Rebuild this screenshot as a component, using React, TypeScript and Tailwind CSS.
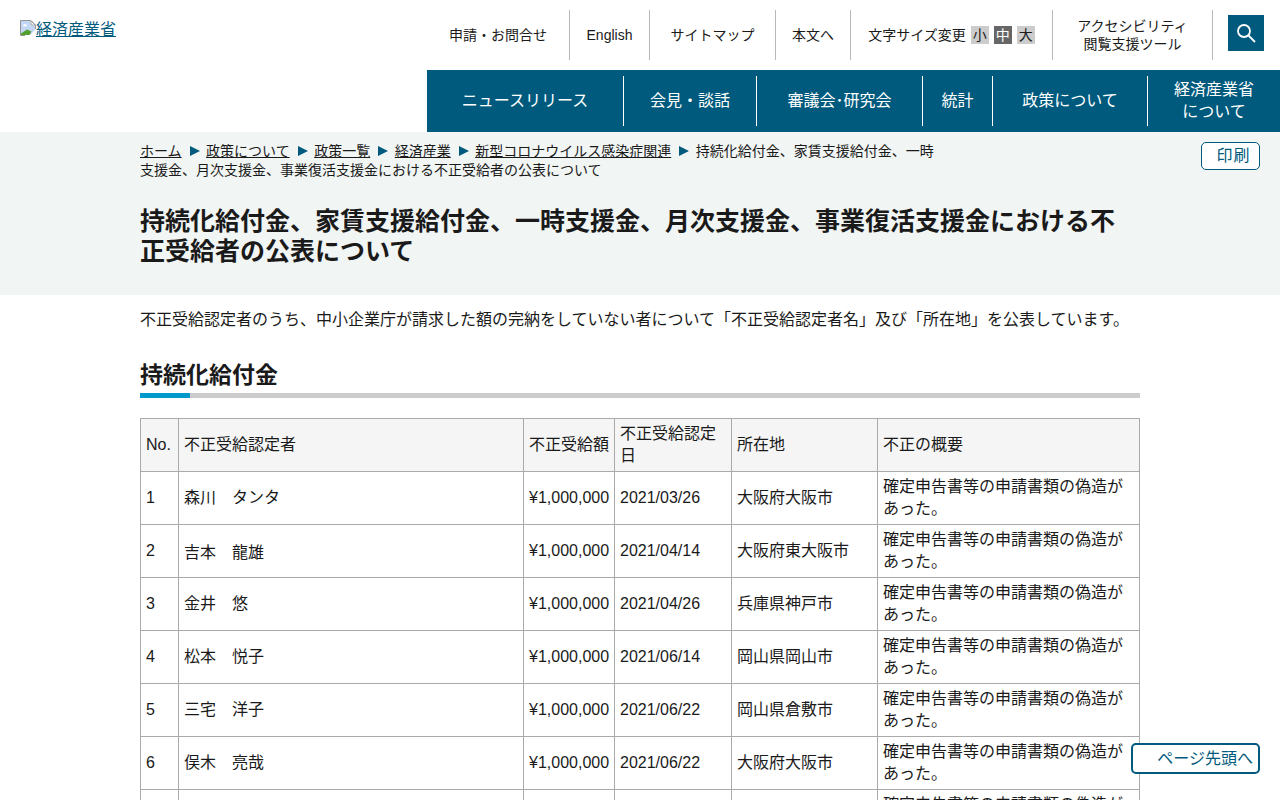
const font = "[font-family:'Liberation_Sans','Noto_Sans_CJK_JP',sans-serif]";

const rows = [
  ["1", "森川　タンタ", "2021/03/26", "大阪府大阪市"],
  ["2", "吉本　龍雄", "2021/04/14", "大阪府東大阪市"],
  ["3", "金井　悠", "2021/04/26", "兵庫県神戸市"],
  ["4", "松本　悦子", "2021/06/14", "岡山県岡山市"],
  ["5", "三宅　洋子", "2021/06/22", "岡山県倉敷市"],
  ["6", "俣木　亮哉", "2021/06/22", "大阪府大阪市"],
  ["7", "林　大輔", "2021/06/28", "大阪府大阪市"],
];

const crumbs = ["政策について", "政策一覧", "経済産業", "新型コロナウイルス感染症関連"];

function BrokenImage() {
  return (
    <svg width="16" height="16" viewBox="0 0 16 16" className="shrink-0">
      <path d="M1 1H10.5V5.5H15V10L10 15H1Z" fill="#c3d7f5" />
      <path d="M3 5.5C3 4 6 4 7 5C8 6.5 4 7 3 5.5Z" fill="#fff" />
      <path d="M1 15V13.5L7 9.5L11.5 11.5L9.5 15Z" fill="#54a02f" />
      <path d="M0.5 15.5V0.5H11L15.5 5V9" fill="none" stroke="#949494" />
      <path d="M11 1L15 5H11Z" fill="#fff" stroke="#949494" strokeWidth="0.8" />
      <path d="M0.5 15.5H5" fill="none" stroke="#949494" />
    </svg>
  );
}

function TopItem({ w, children }: { w: string; children: React.ReactNode }) {
  return <div className={`${w} h-[50px] flex items-center justify-center border-r border-[#b8b8b8] text-center`}>{children}</div>;
}

function NavItem({ w, last, children }: { w: string; last?: boolean; children: React.ReactNode }) {
  return (
    <div className={`${w} h-[50px] flex items-center justify-center text-center leading-[22px] ${last ? "" : "border-r border-white"}`}>
      {children}
    </div>
  );
}

function Arrow() {
  return <span className="inline-block ml-[8px] mr-[6.5px] w-0 h-0 border-y-[5px] border-y-transparent border-l-[10px] border-l-[#005a7d]" />;
}

export default function App() {
  return (
    <div className={`${font} relative h-[800px] overflow-hidden bg-white text-[16px] text-[#1a1a1a]`}>
      <header className="flex justify-between h-[132px]">
        <a href="#" className="ml-5 mt-[20px] h-[19px] flex items-start text-[#005a7d] underline leading-[18px]">
          <BrokenImage />
          <span className="mt-[1px]">経済産業省</span>
        </a>
        <div className="flex flex-col items-end">
          <div className="flex items-start h-[70px] pt-[10px] text-[14px] leading-[19px]">
            <TopItem w="w-[143px]">申請・お問合せ</TopItem>
            <TopItem w="w-[80px]">English</TopItem>
            <TopItem w="w-[126px]">サイトマップ</TopItem>
            <TopItem w="w-[75px]">本文へ</TopItem>
            <TopItem w="w-[202px]">
              <span>文字サイズ変更</span>
              <span className="ml-[5px] w-[18px] h-[18px] bg-[#cccccc] leading-[18px]">小</span>
              <span className="ml-[5px] w-[18px] h-[18px] bg-[#666666] text-white leading-[18px]">中</span>
              <span className="ml-[5px] w-[18px] h-[18px] bg-[#cccccc] leading-[18px]">大</span>
            </TopItem>
            <TopItem w="w-[160px]">
              <span className="leading-[18px]">アクセシビリティ<br />閲覧支援ツール</span>
            </TopItem>
            <div className="w-[67px] h-[50px] flex items-center justify-end pr-4">
              <div className="w-9 h-9 mt-[-5px] bg-[#005a7d] flex items-center justify-center">
                <svg width="20" height="20" viewBox="0 0 20 20" fill="none" stroke="#fff" strokeWidth="1.8">
                  <circle cx="8" cy="8" r="6" />
                  <path d="M12.5 12.5L19 19" />
                </svg>
              </div>
            </div>
          </div>
          <nav className="w-[853px] h-[62px] bg-[#005a7d] flex items-center text-white">
            <NavItem w="w-[197px]">ニュースリリース</NavItem>
            <NavItem w="w-[133px]">会見・談話</NavItem>
            <NavItem w="w-[166px]">審議会･研究会</NavItem>
            <NavItem w="w-[70px]">統計</NavItem>
            <NavItem w="w-[155px]">政策について</NavItem>
            <NavItem w="w-[132px]" last>経済産業省<br />について</NavItem>
          </nav>
        </div>
      </header>

      <section className="relative h-[163px] bg-[#f1f5f4] pl-[140px]">
        <div className="w-[800px] pt-[10px] text-[14px] leading-[19px]">
          <a href="#" className="underline">ホーム</a>
          {crumbs.map((c) => (
            <span key={c}>
              <Arrow />
              <a href="#" className="underline">{c}</a>
            </span>
          ))}
          <Arrow />
          持続化給付金、家賃支援給付金、一時支援金、月次支援金、事業復活支援金における不正受給者の公表について
        </div>
        <h1 className="mt-[26px] w-[990px] text-[25px] leading-[30px] font-bold">
          持続化給付金、家賃支援給付金、一時支援金、月次支援金、事業復活支援金における不正受給者の公表について
        </h1>
        <button className="absolute right-5 top-[10px] w-[59px] h-[28px] pl-[6px] bg-white border border-[#005a7d] rounded-[5px] text-[#005a7d] leading-[24px] tracking-[1px]">
          印刷
        </button>
      </section>

      <main className="w-[1000px] ml-[140px]">
        <p className="mt-[14px] leading-[22px]">
          不正受給認定者のうち、中小企業庁が請求した額の完納をしていない者について「不正受給認定者名」及び「所在地」を公表しています。
        </p>
        <h2 className="mt-[28px] text-[23px] leading-[32px] font-bold border-b-[5px] border-[#cccccc] pb-[2px] relative">
          持続化給付金
          <span className="absolute left-0 bottom-[-5px] w-[50px] h-[5px] bg-[#0099cc]" />
        </h2>
        <table className="mt-[20px] w-[999px] table-fixed border-collapse leading-[22px]">
          <colgroup>
            <col className="w-[38px]" />
            <col className="w-[345px]" />
            <col className="w-[91px]" />
            <col className="w-[117px]" />
            <col className="w-[146px]" />
            <col className="w-[262px]" />
          </colgroup>
          <thead>
            <tr className="h-[53px] bg-[#f5f5f5]">
              {["No.", "不正受給認定者", "不正受給額", "不正受給認定日", "所在地", "不正の概要"].map((h) => (
                <th key={h} className="border border-[#aaaaaa] px-[5px] font-normal text-left">{h}</th>
              ))}
            </tr>
          </thead>
          <tbody>
            {rows.map((r) => (
              <tr key={r[0]} className="h-[53px]">
                <td className="border border-[#aaaaaa] px-[5px]">{r[0]}</td>
                <td className={`border border-[#aaaaaa] px-[5px] ${r[0] === "2" ? "pt-1" : ""}`}>{r[1]}</td>
                <td className="border border-[#aaaaaa] px-[5px]">¥1,000,000</td>
                <td className="border border-[#aaaaaa] px-[5px]">{r[2]}</td>
                <td className="border border-[#aaaaaa] px-[5px]">{r[3]}</td>
                <td className="border border-[#aaaaaa] px-[5px]">確定申告書等の申請書類の偽造があった。</td>
              </tr>
            ))}
          </tbody>
        </table>
      </main>

      <a href="#" className="absolute left-[1131px] top-[743px] w-[129px] h-[31px] bg-white border-2 border-[#005a7d] rounded-[5px] text-[#005a7d] leading-[27px] text-right pr-[5px]">
        ページ先頭へ
      </a>
    </div>
  );
}
